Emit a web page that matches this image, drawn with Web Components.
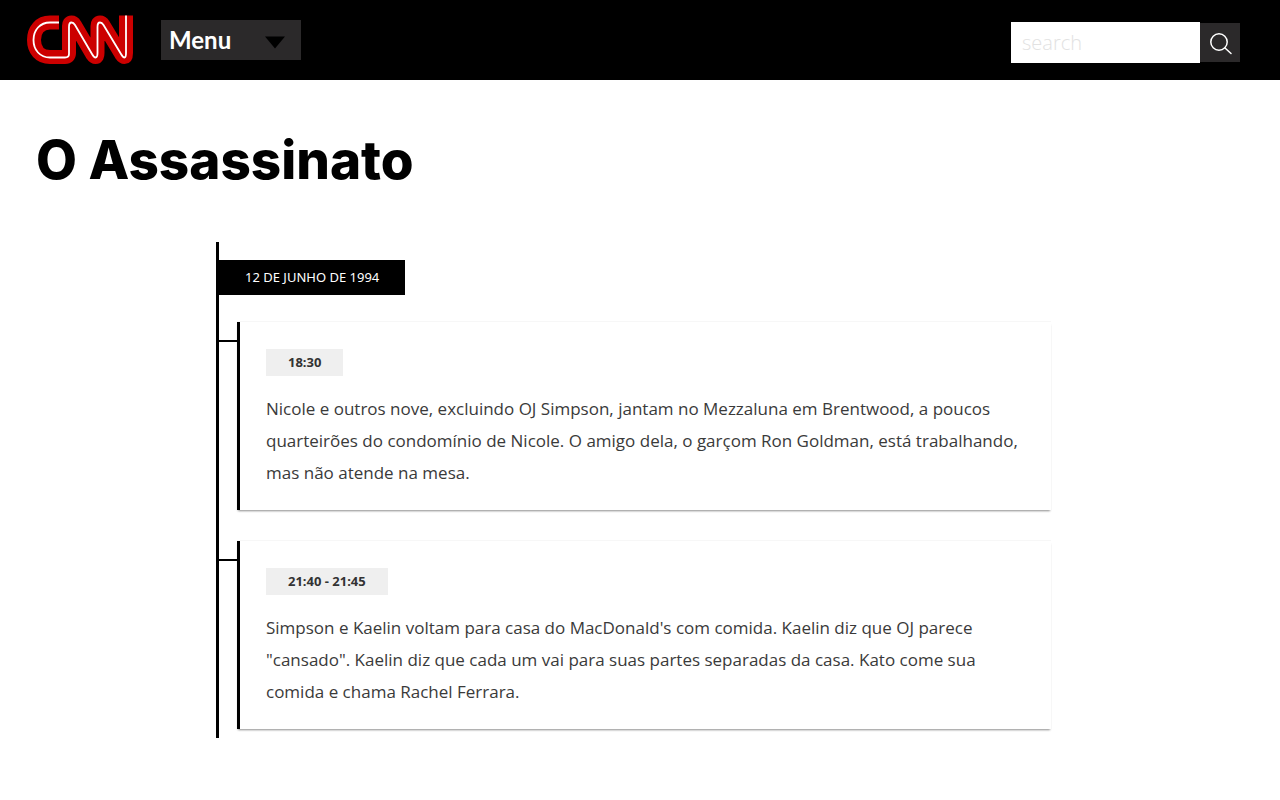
<!DOCTYPE html>
<html lang="pt">
<head>
<meta charset="utf-8">
<meta name="viewport" content="width=device-width, initial-scale=1">
<title>O Assassinato</title>
<style>
body { margin: 0; background: #fff; color: #3a3a3a; font-family: "Open Sans", "Noto Sans", sans-serif; }
</style>
</head>
<body>
<site-header></site-header>
<article-page>
  <span slot="title">O Assassinato</span>
  <time-line date="12 DE JUNHO DE 1994">
    <time-event time="18:30">Nicole e outros nove, excluindo OJ Simpson, jantam no Mezzaluna em Brentwood, a poucos quarteirões do condomínio de Nicole. O amigo dela, o garçom Ron Goldman, está trabalhando, mas não atende na mesa.</time-event>
    <time-event time="21:40 - 21:45">Simpson e Kaelin voltam para casa do MacDonald's com comida. Kaelin diz que OJ parece "cansado". Kaelin diz que cada um vai para suas partes separadas da casa. Kato come sua comida e chama Rachel Ferrara.</time-event>
  </time-line>
</article-page>
<script>
const define = (name, render) => customElements.define(name, class extends HTMLElement {
  constructor() {
    super();
    this.attachShadow({ mode: "open" });
  }
  connectedCallback() {
    this.shadowRoot.innerHTML = render(this);
  }
});

define("cnn-logo", () => `
<style>
  :host { display: block; }
  a, svg { display: block; }
  path { fill: none; }
</style>
<a href="#" aria-label="CNN">
  <svg width="106" height="50" viewBox="27 15 106 50" aria-hidden="true">
    <path stroke="#c00" stroke-width="14" stroke-linejoin="round" d="M59 22.5H50C40 22.5 34 30 34 40C34 50 40 57 50 57H65Q69 57 69 53V26Q69 22.500 71.500 22.500Q73.500 22.500 75 25L92 54Q94 57 95.500 57Q97.500 57 97.500 53V26Q97.500 22.500 100 22.500Q102 22.500 103.500 25L121 54Q123 57 124.500 57Q126 57 126 53V15.500"/>
    <path stroke="#fff" stroke-width="1.800" d="M59 22.500H50C40 22.500 33.500 30 33.500 40C33.500 50 40 57.500 50 57.500H65Q69 57.500 69 54V27Q69 22.500 71.500 22.500Q73.500 22.500 75 25L92 54Q94 57.500 95.500 57.500Q97.500 57.500 97.500 53V27Q97.500 22.500 100 22.500Q102 22.500 103.500 25L121 54Q123 57.500 124.500 57.500Q126 57.500 126 53V15.500"/>
  </svg>
</a>`);

define("menu-button", () => `
<style>
  :host { display: block; }
  button {
    display: flex; align-items: center; justify-content: space-between;
    width: 140px; height: 40px; padding: 0 15px 0 8px; border: 0;
    background: #2b292a; color: #fff; font: 700 24px/40px Lato, sans-serif;
  }
  svg { display: block; margin-top: 5px; }
</style>
<button type="button" aria-haspopup="true">Menu
  <svg width="22" height="13" viewBox="0 0 22 13" aria-hidden="true"><path d="M1 .5H21L11 12.500Z"/></svg>
</button>`);

define("search-box", () => `
<style>
  :host { display: block; }
  form { display: flex; align-items: center; }
  input {
    box-sizing: border-box; width: 189px; height: 41px; padding: 0 11px; border: 0; border-radius: 0;
    background: #fff; color: #333; font: 300 20px/40px "Open Sans", sans-serif;
  }
  input::placeholder { color: #e2e2e2; opacity: 1; }
  button { width: 40px; height: 39px; padding: 0 0 0 2px; border: 0; background: #2b292a; }
  svg { display: block; margin: 2px auto 0; }
</style>
<form role="search">
  <input type="text" placeholder="search" aria-label="search">
  <button type="button" aria-label="search">
    <svg width="22" height="22" viewBox="0 0 22 22" fill="none" stroke="#fff" stroke-width="1.500" stroke-linecap="round" aria-hidden="true"><circle cx="9" cy="9" r="8.200"/><path d="M15 15L21 20.500"/></svg>
  </button>
</form>`);

define("site-header", () => `
<style>
  :host { display: block; background: #000; }
  header { display: flex; align-items: center; min-height: 80px; padding: 0 40px 0 27px; box-sizing: border-box; }
  menu-button { margin-left: 28px; }
  search-box { margin-left: auto; padding-top: 5px; }
</style>
<header><cnn-logo></cnn-logo><menu-button></menu-button><search-box></search-box></header>`);

define("article-page", () => `
<style>
  :host { display: block; }
  h1 { margin: 0; padding: 48px 36px 50px; color: #000; font: 800 53px/64px Inter, sans-serif; }
</style>
<main><h1><slot name="title"></slot></h1><slot></slot></main>`);

define("time-line", el => `
<style>
  :host { display: block; padding: 0 229px 48px 216px; }
  section { border-left: 3px solid #000; padding: 18px 0 9px; }
  h2 {
    width: fit-content; margin: 0 0 27px; padding: 0 26px;
    background: #000; color: #fff; font: 400 13px/35px "Noto Sans", sans-serif;
  }
  .events { display: grid; gap: 31px; padding-left: 18px; }
</style>
<section><h2>${el.getAttribute("date")}</h2><div class="events"><slot></slot></div></section>`);

define("time-event", el => `
<style>
  :host {
    display: block; position: relative; padding: 27px 26px 21px; border-left: 3px solid #000;
    background: #fff; box-shadow: 0 -1px 0 #f7f7f7, 0 2px 2px -1px rgba(0, 0, 0, .45);
  }
  :host::before { content: ""; position: absolute; left: -21px; top: 18px; width: 18px; height: 2px; background: #000; }
  time {
    display: block; width: fit-content; padding: 0 22px; background: #efefef;
    color: #333; font: 700 13px/27px "Noto Sans", sans-serif;
  }
  p { margin: 17px 0 0; font-size: 17px; line-height: 32px; }
</style>
<time>${el.getAttribute("time")}</time><p><slot></slot></p>`);
</script>
</body>
</html>
